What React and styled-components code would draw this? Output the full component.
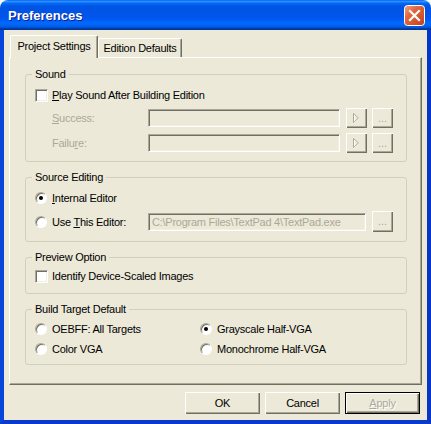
import React from 'react';
import styled, { createGlobalStyle } from 'styled-components';

const GlobalStyle = createGlobalStyle`
  html, body {
    margin: 0;
    padding: 0;
    background: #fff;
  }
  body {
    font-family: 'Liberation Sans', Arial, sans-serif;
    font-size: 11px;
    letter-spacing: -0.25px;
    color: #000;
  }
`;

const Window = styled.div`
  width: 431px;
  height: 424px;
  display: flex;
  flex-direction: column;
  border-radius: 8px 8px 0 0;
  overflow: hidden;
  box-sizing: border-box;
`;

const TitleBar = styled.div`
  height: 30px;
  flex-shrink: 0;
  display: flex;
  align-items: center;
  justify-content: space-between;
  padding: 0 6px 0 8px;
  background: linear-gradient(
    to bottom,
    #0058ee 0%,
    #3593ff 4%,
    #288eff 6%,
    #127dff 8%,
    #036ffc 10%,
    #0262ee 14%,
    #0057e5 20%,
    #0054e3 24%,
    #0055eb 56%,
    #005bf5 66%,
    #026afe 76%,
    #0062ef 86%,
    #0052d6 92%,
    #0040ab 94%,
    #003092 100%
  );
`;

const Title = styled.span`
  color: #fff;
  font-family: 'Liberation Sans', Arial, sans-serif;
  font-weight: bold;
  font-size: 13px;
  letter-spacing: 0;
  text-shadow: 1px 1px #0f1f8f;
  margin-top: 1px;
`;

const CloseBox = styled.div`
  width: 21px;
  height: 21px;
  margin-top: 1px;
`;

const Frame = styled.div`
  flex: 1;
  display: flex;
  flex-direction: column;
  background: #ece9d8;
  border: 4px solid #0845db;
  border-top: none;
  border-bottom-color: #0a3acb;
  border-right-color: #0735c8;
  padding: 5px 5px 0 5px;
`;

const TabRow = styled.div`
  display: flex;
  align-items: flex-end;
  height: 22px;
  padding-left: 1px;
  position: relative;
  z-index: 1;
`;

const Tab = styled.div`
  box-sizing: border-box;
  width: ${p => p.$width}px;
  height: ${p => (p.$active ? 23 : 19)}px;
  margin-bottom: ${p => (p.$active ? -1 : 0)}px;
  padding-top: ${p => (p.$active ? 4 : 3)}px;
  line-height: 13px;
  text-align: center;
  background: #ece9d8;
  border-top: 1px solid #fff;
  border-left: 1px solid #fff;
  border-right: 1px solid #716f64;
  box-shadow: inset -1px 0 #aca899;
  border-radius: 2px 2px 0 0;
`;

const Panel = styled.div`
  box-sizing: border-box;
  height: 328px;
  border: 1px solid;
  border-color: #fff #716f64 #716f64 #fff;
  box-shadow: inset -1px -1px #aca899;
  padding: 10px 14px 0 15px;
  display: flex;
  flex-direction: column;
  gap: 9px;
`;

const Group = styled.fieldset`
  margin: 0;
  min-width: 0;
  border: 1px solid #d0d0bf;
  border-radius: 3px;
  padding: ${p => p.$pad};
  padding-left: 9px;
  padding-right: 12px;
  display: flex;
  flex-direction: column;
  gap: ${p => p.$gap || 5}px;
`;

const Legend = styled.legend`
  padding: 0 3px;
  margin-left: -3px;
  line-height: 13px;
  color: #000;
`;

const Row = styled.div`
  display: flex;
  align-items: center;
  height: ${p => p.$h || 16}px;
`;

const Check = styled.span`
  box-sizing: border-box;
  width: 13px;
  height: 13px;
  flex-shrink: 0;
  background: #fff;
  border: 1px solid;
  border-color: #aca899 #fff #fff #aca899;
  box-shadow: inset 1px 1px #716f64, inset -1px -1px #f1efe2;
  margin-right: 4px;
`;

const Radio = styled.span`
  box-sizing: border-box;
  position: relative;
  width: 12px;
  height: 12px;
  flex-shrink: 0;
  border-radius: 50%;
  background: #fff;
  border: 1px solid;
  border-color: #aca899 #fff #fff #aca899;
  box-shadow: inset 1px 1px #716f64;
  margin-right: 5px;
  &::after {
    content: '';
    display: ${p => (p.$checked ? 'block' : 'none')};
    position: absolute;
    left: 3px;
    top: 3px;
    width: 4px;
    height: 4px;
    border-radius: 50%;
    background: #000;
  }
`;

const Label = styled.span`
  color: ${p => (p.$disabled ? '#aca899' : '#000')};
  ${p => (p.$width ? `width: ${p.$width}px; flex-shrink: 0;` : '')}
  ${p => (p.$indent ? `margin-left: ${p.$indent}px;` : '')}
  white-space: nowrap;
`;

const Key = styled.u`
  text-decoration: underline;
`;

const TextField = styled.div`
  box-sizing: border-box;
  width: ${p => p.$width}px;
  height: 18px;
  flex-shrink: 0;
  border: 1px solid;
  border-color: #aca899 #fff #fff #aca899;
  box-shadow: inset 1px 1px #716f64, inset -1px -1px #f1efe2;
  background: #ece9d8;
  color: #aca899;
  padding: 2px 0 0 3px;
  line-height: 13px;
  white-space: nowrap;
  overflow: hidden;
`;

const SmallButton = styled.div`
  box-sizing: border-box;
  width: 21px;
  height: ${p => p.$h || 20}px;
  flex-shrink: 0;
  margin-left: ${p => p.$gap}px;
  background: #ece9d8;
  box-shadow: inset 1px 1px #fff, inset -1px -1px #716f64, inset -2px -2px #aca899;
  display: flex;
  align-items: center;
  justify-content: center;
  color: #aca899;
  line-height: 13px;
  letter-spacing: 0;
`;

const Choices = styled.div`
  display: grid;
  grid-template-columns: 165px 1fr;
  row-gap: 4px;
`;

const ButtonBar = styled.div`
  display: flex;
  justify-content: flex-end;
  gap: 5px;
  margin-top: 7px;
  padding-right: 2px;
`;

const DialogButton = styled.div`
  box-sizing: border-box;
  width: 75px;
  height: 22px;
  display: flex;
  align-items: center;
  justify-content: center;
  background: #ece9d8;
  border: ${p => (p.$default ? '1px solid #000' : 'none')};
  box-shadow: inset 1px 1px #fff, inset -1px -1px #716f64, inset -2px -2px #aca899;
  color: ${p => (p.$disabled ? '#aca899' : '#000')};
  text-shadow: ${p => (p.$disabled ? '1px 1px #fff' : 'none')};
`;

const CloseIcon = () => (
  <svg width="21" height="21" viewBox="0 0 21 21">
    <defs>
      <linearGradient id="cg" x1="0" y1="0" x2="1" y2="1">
        <stop offset="0" stopColor="#f0a488" />
        <stop offset="0.35" stopColor="#e2683f" />
        <stop offset="1" stopColor="#c2401b" />
      </linearGradient>
    </defs>
    <rect x="0.5" y="0.5" width="20" height="20" rx="3" fill="url(#cg)" stroke="#fff" />
    <path d="M6 6 L15 15 M15 6 L6 15" stroke="#fff" strokeWidth="2.2" strokeLinecap="square" />
  </svg>
);

const PlayIcon = () => (
  <svg width="7" height="11" viewBox="0 0 7 11">
    <path d="M1.5 1.5 V9.5 L6 5.5 Z" fill="none" stroke="#fff" />
    <path d="M0.5 0.5 V9.5 L5.5 5 Z" fill="none" stroke="#aca899" />
  </svg>
);

export default function App() {
  return (
    <>
      <GlobalStyle />
      <Window>
        <TitleBar>
          <Title>Preferences</Title>
          <CloseBox><CloseIcon /></CloseBox>
        </TitleBar>
        <Frame>
          <TabRow>
            <Tab $active $width={88}>Project Settings</Tab>
            <Tab $width={84}>Edition Defaults</Tab>
          </TabRow>
          <Panel>
            <Group $pad="6px 12px 8px 9px">
              <Legend>Sound</Legend>
              <Row>
                <Check />
                <Label><Key>P</Key>lay Sound After Building Edition</Label>
              </Row>
              <Row $h={20}>
                <Label $disabled $indent={17} $width={96}><Key>S</Key>uccess:</Label>
                <TextField $width={192} />
                <SmallButton $gap={6}><PlayIcon /></SmallButton>
                <SmallButton $gap={5}>...</SmallButton>
              </Row>
              <Row $h={20}>
                <Label $disabled $indent={17} $width={96}>Failu<Key>r</Key>e:</Label>
                <TextField $width={192} />
                <SmallButton $gap={6}><PlayIcon /></SmallButton>
                <SmallButton $gap={5}>...</SmallButton>
              </Row>
            </Group>

            <Group $pad="6px 12px 9px 9px">
              <Legend>Source Editing</Legend>
              <Row>
                <Radio $checked />
                <Label><Key>I</Key>nternal Editor</Label>
              </Row>
              <Row $h={21}>
                <Radio />
                <Label $width={96}>Use <Key>T</Key>his Editor:</Label>
                <TextField $width={218}>{'C:\\Program Files\\TextPad 4\\TextPad.exe'}</TextField>
                <SmallButton $gap={6} $h={21}>...</SmallButton>
              </Row>
            </Group>

            <Group $pad="4px 12px 9px 9px">
              <Legend>Preview Option</Legend>
              <Row>
                <Check />
                <Label>Identify Device-Scaled Images</Label>
              </Row>
            </Group>

            <Group $pad="5px 12px 7px 9px">
              <Legend>Build Target Default</Legend>
              <Choices>
                <Row><Radio /><Label>OEBFF: All Targets</Label></Row>
                <Row><Radio $checked /><Label>Grayscale Half-VGA</Label></Row>
                <Row><Radio /><Label>Color VGA</Label></Row>
                <Row><Radio /><Label>Monochrome Half-VGA</Label></Row>
              </Choices>
            </Group>
          </Panel>
          <ButtonBar>
            <DialogButton>OK</DialogButton>
            <DialogButton>Cancel</DialogButton>
            <DialogButton $default $disabled><Key>A</Key>pply</DialogButton>
          </ButtonBar>
        </Frame>
      </Window>
    </>
  );
}
